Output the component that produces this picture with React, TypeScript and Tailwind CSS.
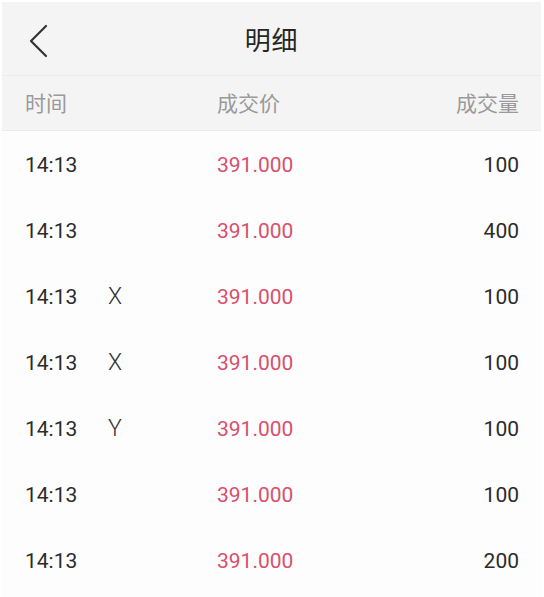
const trades = [
  { time: '14:13', flag: '', price: '391.000', volume: '100' },
  { time: '14:13', flag: '', price: '391.000', volume: '400' },
  { time: '14:13', flag: 'X', price: '391.000', volume: '100' },
  { time: '14:13', flag: 'X', price: '391.000', volume: '100' },
  { time: '14:13', flag: 'Y', price: '391.000', volume: '100' },
  { time: '14:13', flag: '', price: '391.000', volume: '100' },
  { time: '14:13', flag: '', price: '391.000', volume: '200' }
]

const font = { fontFamily: 'Roboto, "Noto Sans CJK SC", sans-serif' }

export default function App() {
  return (
    <div className="w-[544px] h-[597px] bg-white pt-[2px] pl-[2px] pr-[3px] overflow-hidden" style={font}>
      <div className="h-full flex flex-col bg-[#fdfdfd]">
        {/* Top bar */}
        <div className="relative h-[74px] flex items-center justify-center pt-[6px] bg-[#f4f4f4] border-b border-[#ebebeb]">
          <svg className="absolute left-[26px] top-[22px]" width="20" height="34" viewBox="0 0 20 34" fill="none">
            <polyline points="18,2 3,17 18,32" stroke="#333" strokeWidth="2.2" strokeLinecap="round" strokeLinejoin="round" />
          </svg>
          <h1 className="text-[26px] text-[#262626] tracking-wide">明细</h1>
        </div>

        {/* Column header */}
        <div className="h-[55px] flex items-center pt-[3px] bg-[#f4f4f4] border-b border-[#ececec] pl-[23px] pr-[22px] text-[21px] text-[#9a9a9a]">
          <span className="w-[192px]">时间</span>
          <span className="flex-1">成交价</span>
          <span>成交量</span>
        </div>

        {/* Rows */}
        <div className="flex flex-col">
          {trades.map((t, i) => (
            <div key={i} className="h-[66px] flex items-center pt-[3px] pl-[23px] pr-[22px] text-[21px]">
              <span className="w-[83px] text-[#2b2b2b]">{t.time}</span>
              <span className="w-[109px] text-[23px] font-light text-[#333]">{t.flag}</span>
              <span className="flex-1 text-[#d8506b]">{t.price}</span>
              <span className="text-[#2b2b2b]">{t.volume}</span>
            </div>
          ))}
        </div>
      </div>
    </div>
  )
}
